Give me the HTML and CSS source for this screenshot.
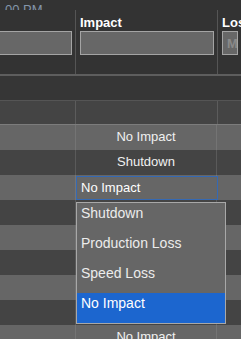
FILE: index.html
```html
<!DOCTYPE html>
<html>
<head>
<meta charset="utf-8">
<link rel="stylesheet" href="styles.css">
</head>
<body>
<div class="page">
  <div class="clock"><span class="clock-text">00 PM</span></div>
  <div class="filters">
    <div class="fcol fcol-first">
      <div class="flabel">&nbsp;</div>
      <div class="finput finput-first"></div>
    </div>
    <div class="fcol">
      <div class="flabel">Impact</div>
      <div class="finput"></div>
    </div>
    <div class="fcol">
      <div class="flabel">Loss</div>
      <div class="finput"><span class="placeholder">Min</span></div>
    </div>
  </div>
  <div class="band"></div>
  <div class="colhead">
    <div class="hcell"></div>
    <div class="hcell hcell-div"></div>
    <div class="hcell hcell-div"></div>
  </div>
  <div class="rows">
    <div class="row light"><div class="cell"></div><div class="cell mid">No Impact</div><div class="cell"></div></div>
    <div class="row dark"><div class="cell"></div><div class="cell mid">Shutdown</div><div class="cell"></div></div>
    <div class="row light"><div class="cell"></div><div class="cell mid edit">
        <div class="select">No Impact</div>
        <div class="dropdown">
          <div class="opt">Shutdown</div>
          <div class="opt">Production Loss</div>
          <div class="opt">Speed Loss</div>
          <div class="opt opt-sel">No Impact</div>
        </div>
      </div><div class="cell"></div></div>
    <div class="row dark"><div class="cell"></div><div class="cell mid"></div><div class="cell"></div></div>
    <div class="row light"><div class="cell"></div><div class="cell mid"></div><div class="cell"></div></div>
    <div class="row dark"><div class="cell"></div><div class="cell mid"></div><div class="cell"></div></div>
    <div class="row light"><div class="cell"></div><div class="cell mid"></div><div class="cell"></div></div>
    <div class="row dark"><div class="cell"></div><div class="cell mid"></div><div class="cell"></div></div>
    <div class="row light"><div class="cell"></div><div class="cell mid">No Impact</div><div class="cell"></div></div>
  </div>
</div>
</body>
</html>
```
FILE: styles.css
```css
html, body {
  margin: 0;
  padding: 0;
  background: #333333;
}
.page {
  width: 241px;
  height: 339px;
  overflow: hidden;
  font-family: "Liberation Sans", Arial, sans-serif;
  font-size: 13px;
  color: #f0f0f0;
  background: #333333;
}
.clock {
  height: 10px;
  overflow: hidden;
  white-space: nowrap;
}
.clock-text {
  display: block;
  padding: 2px 0 0 5px;
  line-height: 15px;
  color: #8496aa;
}
.filters {
  display: grid;
  grid-template-columns: 75px 142px 1fr;
  height: 64px;
  overflow: hidden;
}
.fcol {
  border-left: 1px solid #555555;
  padding: 4px 3px 0 4px;
  min-width: 0;
  overflow: hidden;
}
.fcol-first {
  border-left: none;
  padding-left: 0;
  padding-right: 3px;
}
.flabel {
  font-weight: bold;
  line-height: 15px;
  height: 16px;
  padding-top: 1px;
  color: #ffffff;
  white-space: nowrap;
}
.finput {
  box-sizing: border-box;
  height: 24px;
  background: #676767;
  border: 1px solid #a4a4a4;
  overflow: hidden;
  white-space: nowrap;
}
.finput-first {
  margin-left: -10px;
}
.placeholder {
  display: block;
  padding: 4px 0 0 4px;
  line-height: 15px;
  color: #8a8a8a;
  font-weight: bold;
}
.band {
  border-top: 2px solid #5e5e5e;
  height: 24px;
  background: #363636;
  border-bottom: 1px solid #555555;
}
.colhead {
  display: grid;
  grid-template-columns: 75px 142px 1fr;
  height: 23px;
  background: #444444;
  border-bottom: 1px solid #7c7c7c;
}
.hcell-div {
  border-left: 1px solid #5c5c5c;
}
.row {
  display: grid;
  grid-template-columns: 75px 142px 1fr;
  height: 25px;
  line-height: 23px;
}
.light {
  background: #666666;
}
.dark {
  background: #444444;
}
.cell {
  min-width: 0;
  white-space: nowrap;
}
.mid {
  border-left: 1px solid #747474;
  border-right: 1px solid #747474;
  text-align: center;
}
.dark .mid {
  border-color: #5a5a5a;
}
.edit {
  position: relative;
  text-align: left;
}
.select {
  box-sizing: border-box;
  margin: 1px -2px 0 0;
  height: 24px;
  border: 1px solid #3569b3;
  background: #666666;
  padding-left: 4px;
  line-height: 21px;
  color: #ffffff;
}
.dropdown {
  position: absolute;
  top: 27px;
  left: 0;
  width: 150px;
  box-sizing: border-box;
  background: #666666;
  border: 1px solid #a8a8a8;
  z-index: 2;
}
.opt {
  height: 30px;
  box-sizing: border-box;
  padding: 2px 4px 0 4px;
  line-height: 17px;
  font-size: 14px;
  color: #ececec;
}
.opt-sel {
  background: #1c66cf;
  color: #ffffff;
}
```
